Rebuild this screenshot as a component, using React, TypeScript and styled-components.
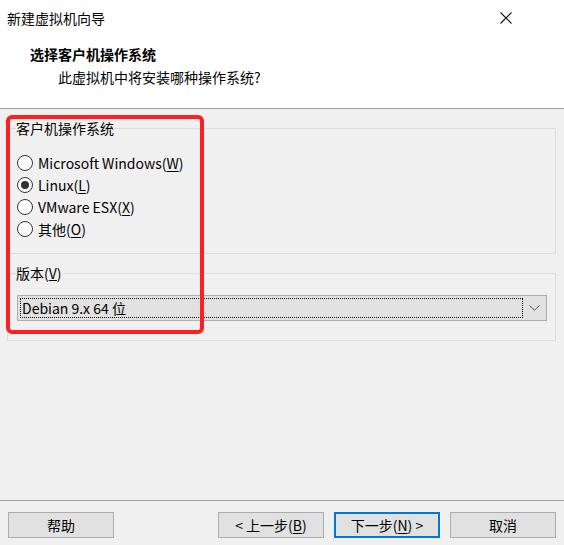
import styled, { createGlobalStyle } from 'styled-components'

const GlobalStyle = createGlobalStyle`
  html, body {
    margin: 0;
    padding: 0;
    background: #f0f0f0;
  }
  * {
    box-sizing: border-box;
  }
`

const osOptions = [
  { label: 'Microsoft Windows', key: 'W', checked: false },
  { label: 'Linux', key: 'L', checked: true },
  { label: 'VMware ESX', key: 'X', checked: false },
  { label: '其他', key: 'O', checked: false }
]

export default function App() {
  return (
    <>
      <GlobalStyle />
      <Window>
        {/* HEADER */}
        <Header>
          <TitleBar>
            <span>新建虚拟机向导</span>
            <CloseButton aria-label="关闭">
              <svg width="12" height="12" viewBox="0 0 12 12">
                <path d="M0.5 0.5 L11.5 11.5 M11.5 0.5 L0.5 11.5" stroke="#111" strokeWidth="1.1" />
              </svg>
            </CloseButton>
          </TitleBar>
          <Heading>选择客户机操作系统</Heading>
          <Subtitle>此虚拟机中将安装哪种操作系统?</Subtitle>
        </Header>

        {/* BODY */}
        <Body>
          <Group $top={10} $paddingTop={15} $paddingBottom={13}>
            <legend>客户机操作系统</legend>
            {osOptions.map((os) => (
              <RadioRow key={os.key}>
                <Radio $checked={os.checked} />
                <span>
                  {os.label}(<u>{os.key}</u>)
                </span>
              </RadioRow>
            ))}
          </Group>

          <Group $top={10} $paddingTop={13} $paddingBottom={19}>
            <legend>
              版本(<u>V</u>)
            </legend>
            <Combo>
              <div className="combo__value">Debian 9.x 64 位</div>
              <div className="combo__arrow">
                <svg width="11" height="6" viewBox="0 0 11 6">
                  <path d="M0.5 0.5 L5.5 5.2 L10.5 0.5" fill="none" stroke="#555" strokeWidth="1" />
                </svg>
              </div>
            </Combo>
          </Group>

          <Highlight />
        </Body>

        {/* FOOTER */}
        <Footer>
          <Button>帮助</Button>
          <div className="nav">
            <Button>
              &lt; 上一步(<u>B</u>)
            </Button>
            <Button $primary>
              下一步(<u>N</u>) &gt;
            </Button>
            <Button>取消</Button>
          </div>
        </Footer>
      </Window>
    </>
  )
}

const Window = styled.div`
  width: 564px;
  height: 545px;
  display: flex;
  flex-direction: column;
  background: #f0f0f0;
  color: #000;
  font-family: 'Noto Sans CJK SC', 'Noto Sans', sans-serif;
  font-size: 14px;
  overflow: hidden;
`

const Header = styled.header`
  background: #ffffff;
  height: 109px;
  border-bottom: 1px solid #a0a0a0;
  display: flex;
  flex-direction: column;
`

const TitleBar = styled.div`
  height: 35px;
  display: flex;
  align-items: center;
  justify-content: space-between;
  padding: 0 0 0 7px;
  font-size: 14px;
`

const CloseButton = styled.div`
  width: 46px;
  height: 35px;
  display: flex;
  align-items: center;
  justify-content: center;
  margin-right: 35px;
`

const Heading = styled.h1`
  margin: 0;
  padding-left: 30px;
  height: 22px;
  line-height: 22px;
  margin-top: 8px;
  font-size: 14px;
  font-weight: 700;
`

const Subtitle = styled.p`
  margin: 0;
  padding-left: 58px;
  height: 22px;
  line-height: 22px;
  margin-top: 1px;
  font-size: 14px;
`

const Body = styled.main`
  position: relative;
  flex: 1;
  padding: 0 8px 0 7px;
  display: flex;
  flex-direction: column;
`

const Group = styled.fieldset<{ $top: number; $paddingTop: number; $paddingBottom: number }>`
  margin: ${(p) => p.$top}px 0 0;
  padding: ${(p) => p.$paddingTop}px 8px ${(p) => p.$paddingBottom}px 9px;
  border: 1px solid #dcdcdc;
  min-width: 0;

  legend {
    padding: 0 1px 0 0;
    margin-left: -1px;
    height: 18px;
    line-height: 18px;
    font-size: 14px;
  }
`

const RadioRow = styled.label`
  display: flex;
  align-items: center;
  gap: 5px;
  height: 22px;
  font-size: 14px;

  u {
    text-underline-offset: 2px;
  }
`

const Radio = styled.span<{ $checked?: boolean }>`
  width: 16px;
  height: 16px;
  border-radius: 50%;
  border: 1px solid #333333;
  background: #ffffff;
  display: flex;
  align-items: center;
  justify-content: center;
  flex-shrink: 0;

  &::after {
    content: '';
    width: 8px;
    height: 8px;
    border-radius: 50%;
    background: #333333;
    display: ${(p) => (p.$checked ? 'block' : 'none')};
  }
`

const Combo = styled.div`
  height: 26px;
  display: flex;
  align-items: stretch;
  background: #e1e1e1;
  border: 1px solid #adadad;
  padding: 2px 0 2px 2px;

  .combo__value {
    flex: 1;
    border: 1px dotted #000;
    display: flex;
    align-items: center;
    padding-left: 1px;
    font-size: 14px;
  }

  .combo__arrow {
    width: 23px;
    display: flex;
    align-items: center;
    justify-content: center;
  }
`

const Highlight = styled.div`
  position: absolute;
  left: 6px;
  top: 6px;
  width: 198px;
  height: 219px;
  border: 4px solid #ff1f1f;
  border-radius: 6px;
  pointer-events: none;
`

const Footer = styled.footer`
  height: 45px;
  border-top: 1px solid #a0a0a0;
  display: flex;
  justify-content: space-between;
  align-items: flex-start;
  padding: 11px 8px 0;

  .nav {
    display: flex;
    gap: 10px;
  }
`

const Button = styled.button<{ $primary?: boolean }>`
  width: 106px;
  height: 26px;
  padding: 0;
  background: #e1e1e1;
  border: ${(p) => (p.$primary ? '2px solid #0078d7' : '1px solid #adadad')};
  font-family: inherit;
  font-size: 14px;
  color: #000;
  display: flex;
  align-items: center;
  justify-content: center;

  u {
    text-underline-offset: 2px;
  }
`
